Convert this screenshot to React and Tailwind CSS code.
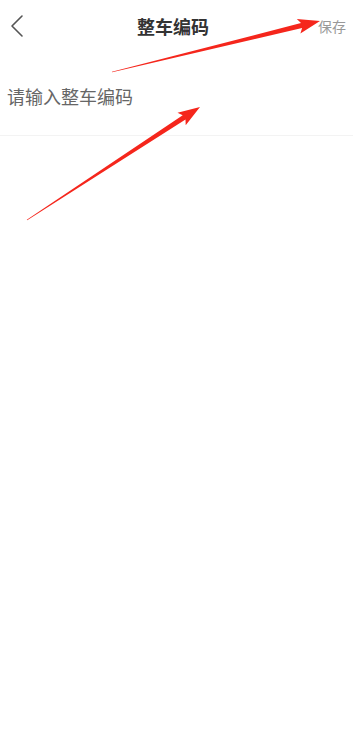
import React from 'react';

const FONT = { fontFamily: '"Noto Sans CJK SC", "Noto Sans", sans-serif' };

// tapered annotation arrow, tail -> tip
function arrowPoints([tx, ty], [px, py]) {
  const dx = px - tx, dy = py - ty;
  const len = Math.hypot(dx, dy);
  const ux = dx / len, uy = dy / len;
  const nx = -uy, ny = ux;
  const L = 19, hw = 7.5, sw = 2.5, tw = 0.3;
  const bx = px - ux * L, by = py - uy * L;
  const cx = px - ux * (L + 3), cy = py - uy * (L + 3);
  const pts = [
    [tx + nx * tw, ty + ny * tw],
    [bx + nx * sw, by + ny * sw],
    [cx + nx * hw, cy + ny * hw],
    [px, py],
    [cx - nx * hw, cy - ny * hw],
    [bx - nx * sw, by - ny * sw],
    [tx - nx * tw, ty - ny * tw],
  ];
  return pts.map(p => p.map(v => v.toFixed(1)).join(',')).join(' ');
}

export default function App() {
  return (
    <div className="relative w-[353px] h-[732px] bg-white overflow-hidden" style={FONT}>
      <div className="h-[52px] flex items-center justify-between px-[7px]">
        <button className="w-[30px] h-[30px] flex items-center">
          <svg width="20" height="24" viewBox="0 0 20 24" fill="none">
            <polyline points="15,2 5,12 15,22" stroke="#555" strokeWidth="1.6" strokeLinecap="round" strokeLinejoin="round" />
          </svg>
        </button>
        <h1 className="text-[18px] font-bold text-[#333] leading-none">整车编码</h1>
        <span className="w-[37px] text-[14px] text-[#999] text-right leading-none">保存</span>
      </div>

      <div className="h-[84px] pt-[6px] flex items-center border-b border-[#f3f3f3]">
        <input
          className="w-full px-[7px] text-[18px] outline-none bg-transparent placeholder:text-[#666] text-[#333]"
          style={FONT}
          placeholder="请输入整车编码"
        />
      </div>

      <svg className="absolute inset-0 pointer-events-none" width="353" height="732">
        <polygon points={arrowPoints([112, 72], [320, 21])} fill="#f5261c" />
        <polygon points={arrowPoints([27, 220], [200, 107])} fill="#f5261c" />
      </svg>
    </div>
  );
}
